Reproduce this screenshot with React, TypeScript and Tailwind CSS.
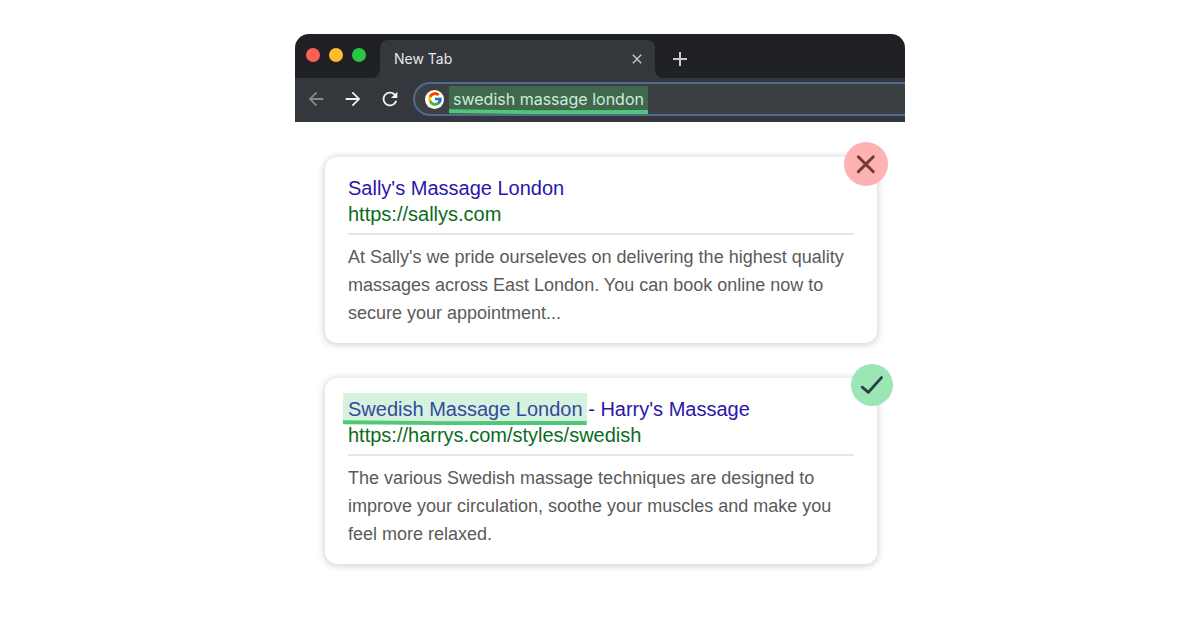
import React from 'react';
import { MdArrowBack, MdArrowForward, MdRefresh, MdClose, MdAdd } from 'react-icons/md';
import { FcGoogle } from 'react-icons/fc';

interface Result {
    title: string;
    match?: string;
    url: string;
    description: string;
    good: boolean;
}

const RESULTS: Result[] = [
    {
        title: "Sally's Massage London",
        url: 'https://sallys.com',
        description:
            "At Sally's we pride ourseleves on delivering the highest quality massages across East London. You can book online now to secure your appointment...",
        good: false,
    },
    {
        match: 'Swedish Massage London',
        title: " - Harry's Massage",
        url: 'https://harrys.com/styles/swedish',
        description:
            'The various Swedish massage techniques are designed to improve your circulation, soothe your muscles and make you feel more relaxed.',
        good: true,
    },
];

// Marker stroke under highlighted text, slightly sloped
const Underline: React.FC = () => (
    <svg className="absolute bottom-0 left-0 h-[5px] w-full" viewBox="0 0 100 5" preserveAspectRatio="none" aria-hidden="true">
        <path d="M0 0.2L40 1.2L100 1V5H40L0 4Z" fill="#4fc978" />
    </svg>
);

const TabCurve: React.FC<{ className: string }> = ({ className }) => (
    <svg className={`absolute bottom-0 size-2 ${className}`} viewBox="0 0 8 8" aria-hidden="true">
        <path d="M8 0V8H0A8 8 0 0 0 8 0Z" fill="#34373b" />
    </svg>
);

const BrowserBar: React.FC = () => (
    <header className="overflow-hidden rounded-t-[14px] bg-[#202124] font-['Inter',sans-serif]">
        <div className="flex h-11 items-end">
            <div className="flex h-[42px] items-center gap-[9px] self-start pr-3.5 pl-[11px]">
                <span className="size-3.5 rounded-full bg-[#ff5f57]" />
                <span className="size-3.5 rounded-full bg-[#febc2e]" />
                <span className="size-3.5 rounded-full bg-[#28c840]" />
            </div>
            <div className="relative flex h-[38px] w-[275px] items-center justify-between rounded-t-lg bg-[#34373b] pr-2.5 pl-3.5">
                <TabCurve className="right-full" />
                <span className="text-sm text-[#e6e7e9]">New Tab</span>
                <button type="button" aria-label="Close tab">
                    <MdClose className="size-4 text-[#c9cbcd]" />
                </button>
                <TabCurve className="left-full -scale-x-100" />
            </div>
            <button type="button" aria-label="New tab" className="flex h-[38px] w-[50px] items-center justify-center">
                <MdAdd className="size-6 text-[#c9cbcd]" />
            </button>
        </div>

        <div className="flex h-11 items-center bg-[#34373b] pb-0.5 pl-[3px]">
            <div className="flex gap-px text-[#f0f1f2]">
                <button type="button" aria-label="Back" className="flex w-9 justify-center text-[#85888b]">
                    <MdArrowBack className="size-[22px]" />
                </button>
                <button type="button" aria-label="Forward" className="flex w-9 justify-center">
                    <MdArrowForward className="size-[22px]" />
                </button>
                <button type="button" aria-label="Reload" className="flex w-9 justify-center">
                    <MdRefresh className="size-[22px]" />
                </button>
            </div>
            <div className="ml-[5px] flex h-[34px] grow items-center rounded-l-full border-2 border-r-0 border-[#526a8f] bg-[#3c4043] pl-2.5">
                <span className="flex size-[19px] items-center justify-center rounded-full bg-white">
                    <FcGoogle className="size-4" />
                </span>
                <label className="relative ml-[5px] w-[199px] self-end">
                    <input
                        type="text"
                        aria-label="Address and search bar"
                        defaultValue="swedish massage london"
                        className="block h-7 w-full bg-[#41674f] px-1 pb-0.5 text-base text-[#c9efd5] outline-none"
                    />
                    <Underline />
                </label>
            </div>
        </div>
    </header>
);

const Badge: React.FC<{ good: boolean }> = ({ good }) =>
    good ? (
        <span className="absolute -top-3.5 -right-4 flex size-[42px] items-center justify-center rounded-full bg-[#9ae6b4]">
            <svg viewBox="0 0 42 42" className="size-full" fill="none" stroke="#2d3f3f" strokeWidth="2.8" strokeLinecap="round" strokeLinejoin="round">
                <path d="M11.2 23.2L17.4 28.3L30.5 13.6" />
            </svg>
        </span>
    ) : (
        <span className="absolute -top-[15px] -right-[11px] flex size-11 items-center justify-center rounded-full bg-[#feb2b2]">
            <svg viewBox="0 0 44 44" className="size-full" fill="none" stroke="#743a2c" strokeWidth="3" strokeLinecap="round">
                <path d="M14.3 14.8L29.3 29.8M29.3 14.8L14.3 29.8" />
            </svg>
        </span>
    );

const ResultCard: React.FC<{ result: Result }> = ({ result }) => (
    <article className="relative rounded-xl bg-white px-[23px] pt-[18px] pb-4 shadow-[0_1px_7px_1px_rgba(0,0,0,0.18)]">
        <Badge good={result.good} />
        <h2 className="text-xl leading-[26px] text-[#2a16ab]">
            <a href="#">
                {result.match && (
                    <mark className="relative -my-[3px] -mr-1 -ml-[5px] inline-block bg-[#d4f2de] py-[3px] pr-1 pl-[5px] text-[#354a9c]">
                        {result.match}
                        <Underline />
                    </mark>
                )}
                {result.title}
            </a>
        </h2>
        <a href="#" className="block text-xl leading-[26px] text-[#0b6b22]">
            {result.url}
        </a>
        <hr className="mt-1.5 mb-2 border-t-2 border-[#e6e6e6]" />
        <p className="text-lg leading-7 text-[#5a5a5a]">{result.description}</p>
    </article>
);

const App: React.FC = () => (
    <div className="min-h-screen bg-white pt-[34px] font-['Liberation_Sans',Arial,sans-serif]">
        <div className="mx-auto max-w-[610px]">
            <BrowserBar />
            <main className="flex flex-col gap-[35px] pt-[35px] pr-7 pb-10 pl-[30px]">
                {RESULTS.map(result => (
                    <ResultCard key={result.url} result={result} />
                ))}
            </main>
        </div>
    </div>
);

export default App;
